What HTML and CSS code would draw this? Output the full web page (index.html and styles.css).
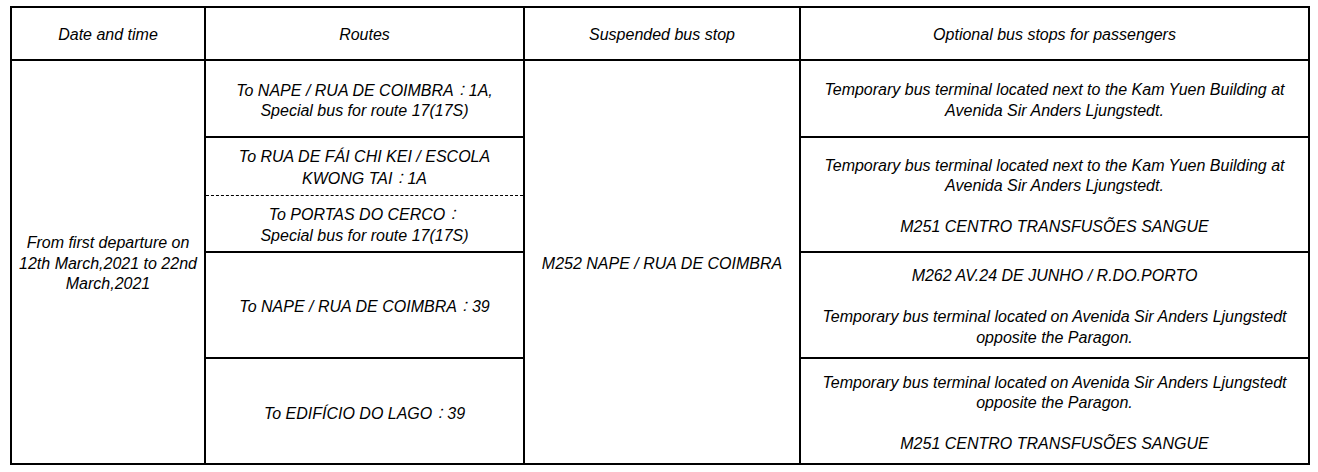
FILE: index.html
```html
<!DOCTYPE html>
<html>
<head>
<meta charset="utf-8">
<link rel="stylesheet" href="styles.css">
</head>
<body>
<div class="page">
<table class="stops">
  <colgroup>
    <col class="c-date">
    <col class="c-route">
    <col class="c-stop">
    <col class="c-opt">
  </colgroup>
  <thead>
    <tr class="r-head">
      <th>Date and time</th>
      <th>Routes</th>
      <th>Suspended bus stop</th>
      <th>Optional bus stops for passengers</th>
    </tr>
  </thead>
  <tbody>
    <tr class="r-1">
      <td rowspan="5">From first departure on 12th March,2021 to 22nd March,2021</td>
      <td>To NAPE / RUA DE COIMBRA<span class="cjk">：</span>1A,<br>Special bus for route 17(17S)</td>
      <td rowspan="5">M252 NAPE / RUA DE COIMBRA</td>
      <td>Temporary bus terminal located next to the Kam Yuen Building at<br>Avenida Sir Anders Ljungstedt.</td>
    </tr>
    <tr class="r-2a">
      <td class="dash-bottom">To RUA DE FÁI CHI KEI / ESCOLA<br>KWONG TAI<span class="cjk">：</span>1A</td>
      <td rowspan="2">
        <p>Temporary bus terminal located next to the Kam Yuen Building at<br>Avenida Sir Anders Ljungstedt.</p>
        <p>M251 CENTRO TRANSFUSÕES SANGUE</p>
      </td>
    </tr>
    <tr class="r-2b">
      <td class="dash-top">To PORTAS DO CERCO<span class="cjk">：</span><br>Special bus for route 17(17S)</td>
    </tr>
    <tr class="r-3">
      <td>To NAPE / RUA DE COIMBRA<span class="cjk">：</span>39</td>
      <td>
        <p>M262 AV.24 DE JUNHO / R.DO.PORTO</p>
        <p>Temporary bus terminal located on Avenida Sir Anders Ljungstedt<br>opposite the Paragon.</p>
      </td>
    </tr>
    <tr class="r-4">
      <td>To EDIFÍCIO DO LAGO<span class="cjk">：</span>39</td>
      <td>
        <p>Temporary bus terminal located on Avenida Sir Anders Ljungstedt<br>opposite the Paragon.</p>
        <p>M251 CENTRO TRANSFUSÕES SANGUE</p>
      </td>
    </tr>
  </tbody>
</table>
</div>
</body>
</html>
```

FILE: styles.css
```css
html, body {
  margin: 0;
  padding: 0;
  background: #ffffff;
}

.page {
  padding: 6px 0 0 10px;
}

.stops {
  border-collapse: collapse;
  table-layout: fixed;
  width: 1300px;
  font-family: "Liberation Sans", Arial, "Noto Sans CJK TC", sans-serif;
  font-size: 16px;
  font-style: italic;
  line-height: 20.5px;
  color: #000;
}

.c-date { width: 194px; }
.c-route { width: 319px; }
.c-stop { width: 276px; }
.c-opt { width: 509px; }

.stops th,
.stops td {
  border: 2px solid #000;
  padding: 4px 5px 0;
  text-align: center;
  vertical-align: middle;
  font-weight: normal;
}

.stops thead th {
  padding-top: 3px;
}

.stops p {
  margin: 0;
}

.stops p + p {
  margin-top: 20.5px;
}

.cjk {
  font-family: "Noto Sans CJK TC", sans-serif;
  font-style: italic;
  font-weight: 300;
  font-size: 15px;
}

.stops td.dash-bottom {
  border-bottom: 1px dashed #000;
}

.stops td.dash-top {
  border-top: 1px dashed #000;
}

.r-head { height: 53px; }
.r-1 { height: 77px; }
.r-2a { height: 58px; }
.r-2b { height: 57px; }
.r-3 { height: 106px; }
.r-4 { height: 106px; }
.r-4 td {
  padding-top: 5px;
}
```
